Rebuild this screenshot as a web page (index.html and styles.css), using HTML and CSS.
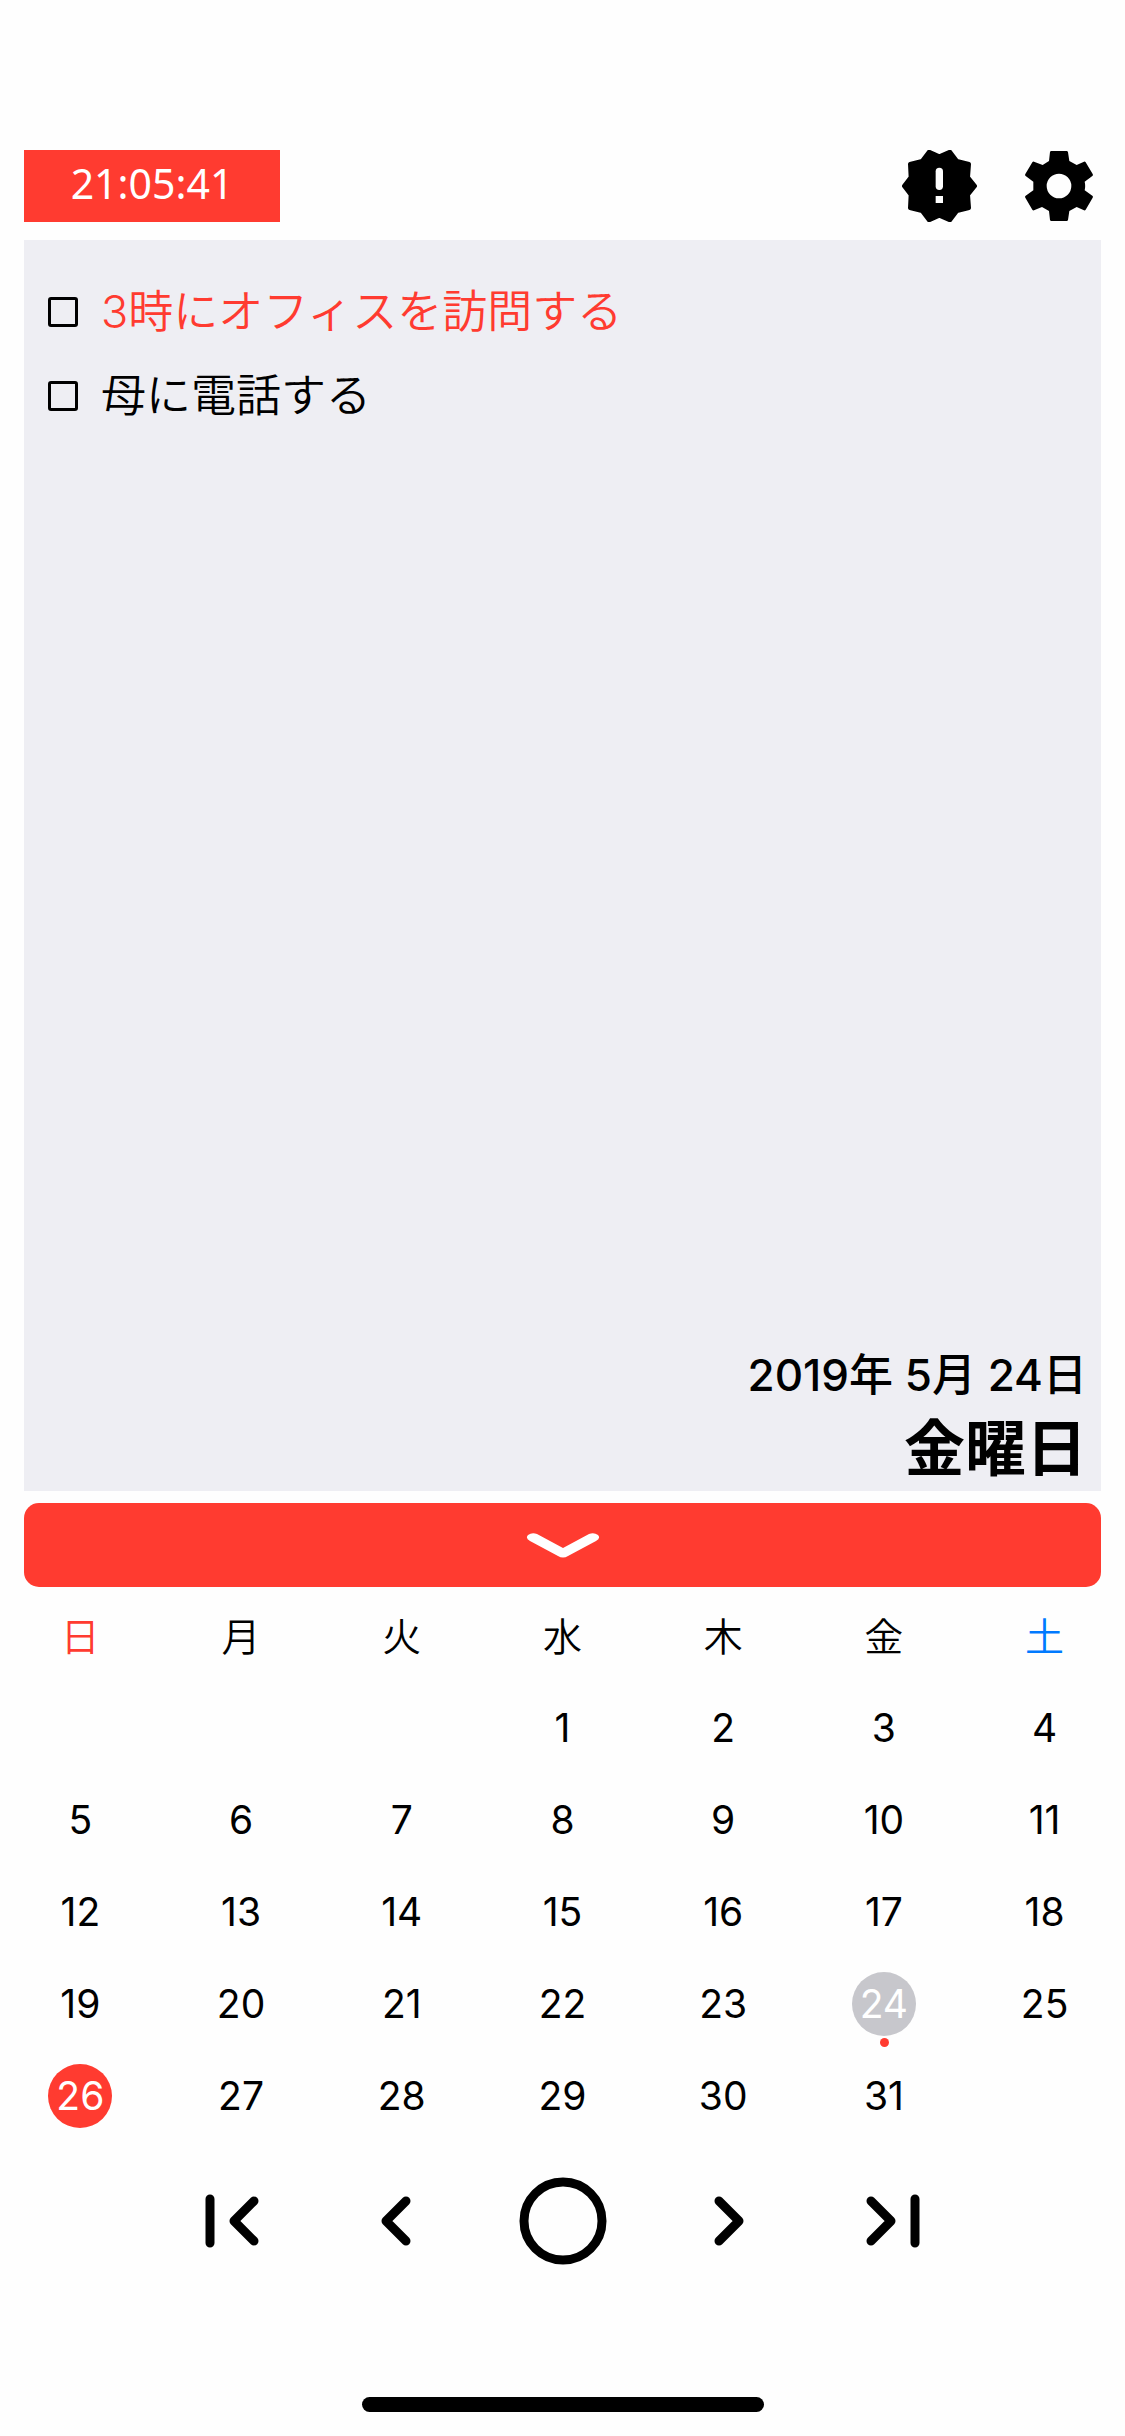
FILE: index.html
```html
<!DOCTYPE html>
<html lang="ja">
<head>
<meta charset="utf-8">
<meta name="viewport" content="width=device-width, initial-scale=1">
<title>カレンダー</title>
<link rel="stylesheet" href="styles.css">
</head>
<body>
<header class="topbar">
  <time class="clock">21:05:41</time>
  <div class="actions">
    <button class="icon-button" type="button" aria-label="お知らせ">
      <svg width="75" height="72" viewBox="65 60 225 216" aria-hidden="true">
        <path class="badge-shape" d="M71 168 91 142 89 102 125 93 146 65 177 79 209 65 230 93 266 102 263 142 284 168 263 194 266 234 230 243 209 271 177 257 146 271 125 243 89 234 91 194Z"/>
        <rect class="cutout" x="166" y="113" width="22" height="67" rx="11"/>
        <rect class="cutout" x="166" y="198" width="22" height="21"/>
      </svg>
    </button>
    <button class="icon-button" type="button" aria-label="設定">
      <svg width="68" height="70" viewBox="435 63 204 210" aria-hidden="true">
        <path fill-rule="evenodd" d="M514 63H560Q563 63 564 67L568 93 590 105 612 95Q615 94 617 97L638 132Q640 136 637 138L614 155Q617 168 614 181L637 197Q640 199 638 203L617 239Q615 242 612 241L590 231 568 243 564 270Q563 273 560 273H514Q511 273 510 270L507 243 486 231 462 241Q459 242 457 239L436 203Q434 199 437 197L460 181V155L437 138Q434 136 436 132L457 97Q459 94 462 95L488 105 507 93 510 66Q511 63 514 63ZM500 168a37 37 0 1 0 74 0a37 37 0 1 0-74 0Z"/>
      </svg>
    </button>
  </div>
</header>

<main class="main">
  <section class="memo">
    <ul class="tasks">
      <li><label class="task task-due"><input class="check" type="checkbox"><span>3時にオフィスを訪問する</span></label></li>
      <li><label class="task"><input class="check" type="checkbox"><span>母に電話する</span></label></li>
    </ul>
    <div class="today">
      <p class="date">2019年 5月 24日</p>
      <p class="weekday">金曜日</p>
    </div>
  </section>

  <button class="fold" type="button" aria-label="カレンダーを閉じる">
    <svg width="76" height="26" viewBox="0 0 76 26" aria-hidden="true"><path d="M3 3Q7 0 12 2L38 16 64 2Q69 0 73 3Q76 6 71 9L43 24Q38 27 33 24L5 9Q0 6 3 3Z"/></svg>
  </button>

  <table class="calendar">
    <thead>
      <tr><th class="sunday">日</th><th>月</th><th>火</th><th>水</th><th>木</th><th>金</th><th class="saturday">土</th></tr>
    </thead>
    <tbody>
      <tr><td></td><td></td><td></td><td><button class="day" type="button">1</button></td><td><button class="day" type="button">2</button></td><td><button class="day" type="button">3</button></td><td><button class="day" type="button">4</button></td></tr>
      <tr><td><button class="day" type="button">5</button></td><td><button class="day" type="button">6</button></td><td><button class="day" type="button">7</button></td><td><button class="day" type="button">8</button></td><td><button class="day" type="button">9</button></td><td><button class="day" type="button">10</button></td><td><button class="day" type="button">11</button></td></tr>
      <tr><td><button class="day" type="button">12</button></td><td><button class="day" type="button">13</button></td><td><button class="day" type="button">14</button></td><td><button class="day" type="button">15</button></td><td><button class="day" type="button">16</button></td><td><button class="day" type="button">17</button></td><td><button class="day" type="button">18</button></td></tr>
      <tr><td><button class="day" type="button">19</button></td><td><button class="day" type="button">20</button></td><td><button class="day" type="button">21</button></td><td><button class="day" type="button">22</button></td><td><button class="day" type="button">23</button></td><td><button class="day day-selected has-task" type="button">24</button></td><td><button class="day" type="button">25</button></td></tr>
      <tr><td><button class="day day-today" type="button">26</button></td><td><button class="day" type="button">27</button></td><td><button class="day" type="button">28</button></td><td><button class="day" type="button">29</button></td><td><button class="day" type="button">30</button></td><td><button class="day" type="button">31</button></td><td></td></tr>
    </tbody>
  </table>
</main>

<nav class="pager">
  <button class="icon-button" type="button" aria-label="前の年"><svg class="line-icon" width="88" height="88" viewBox="0 0 88 88" aria-hidden="true"><path d="M24 22V66M68 24 48 44 68 64"/></svg></button>
  <button class="icon-button" type="button" aria-label="前の月"><svg class="line-icon" width="88" height="88" viewBox="0 0 88 88" aria-hidden="true"><path d="M54 24 34 44 54 64"/></svg></button>
  <button class="icon-button" type="button" aria-label="今日"><svg class="line-icon" width="88" height="88" viewBox="0 0 88 88" aria-hidden="true"><circle cx="44" cy="44" r="39"/></svg></button>
  <button class="icon-button" type="button" aria-label="次の月"><svg class="line-icon" width="88" height="88" viewBox="0 0 88 88" aria-hidden="true"><path d="M34 24 54 44 34 64"/></svg></button>
  <button class="icon-button" type="button" aria-label="次の年"><svg class="line-icon" width="88" height="88" viewBox="0 0 88 88" aria-hidden="true"><path d="M19 24 39 44 19 64M63 22V66"/></svg></button>
</nav>
<div class="home-indicator"></div>
</body>
</html>
```
FILE: styles.css
```css
:root {
  --red: #ff3b30;
  --blue: #007aff;
  --gray: #c7c7cc;
  --panel: #eeeef3;
  --page: #fefefe;
}

* {
  box-sizing: border-box;
}

body {
  display: flex;
  flex-direction: column;
  min-height: 100vh;
  margin: 0;
  padding: 150px 0 24px;
  background: var(--page);
  color: #000;
  font-family: Inter, "Noto Sans CJK JP", sans-serif;
  font-size: 39px;
}

button {
  padding: 0;
  border: 0;
  background: none;
  color: inherit;
  font: inherit;
  cursor: pointer;
}

svg {
  display: block;
}

.topbar {
  display: flex;
  align-items: center;
  justify-content: space-between;
  margin: 0 32px 18px 24px;
}

.clock {
  width: 256px;
  padding-bottom: 6px;
  background: var(--red);
  color: #fff;
  font-family: "Noto Sans", sans-serif;
  font-size: 41px;
  line-height: 66px;
  text-align: center;
}

.actions {
  display: flex;
  align-items: center;
  gap: 48px;
}

.badge-shape {
  stroke: #000;
  stroke-width: 12;
  stroke-linejoin: round;
}

.cutout {
  fill: var(--page);
}

.main {
  display: flex;
  flex: 1;
  flex-direction: column;
}

.memo {
  display: flex;
  flex: 1;
  flex-direction: column;
  justify-content: space-between;
  gap: 48px;
  margin: 0 24px 12px;
  padding: 30px 14px 2px 24px;
  background: var(--panel);
}

.tasks {
  margin: 0;
  padding: 0;
  list-style: none;
}

.task {
  display: flex;
  align-items: center;
  gap: 23px;
  font-size: 45px;
  font-weight: 350;
  line-height: 84px;
}

.task-due {
  color: var(--red);
}

.check {
  appearance: none;
  width: 30px;
  height: 30px;
  margin: 0;
  border: 3px solid #000;
  border-radius: 3px;
}

.check:checked {
  background: #000;
}

.today {
  text-align: right;
}

.date,
.weekday {
  margin: 0;
}

.date {
  font-size: 44px;
  font-weight: 500;
  line-height: 68px;
}

.weekday {
  font-size: 61px;
  font-weight: 700;
  line-height: 80px;
}

.fold {
  display: flex;
  align-items: center;
  justify-content: center;
  height: 84px;
  margin: 0 24px 3px;
  border-radius: 15px;
  background: var(--red);
}

.fold path {
  fill: #fff;
}

.calendar {
  width: 100%;
  border-collapse: collapse;
  table-layout: fixed;
}

.calendar th,
.calendar td {
  height: 92px;
  padding: 0;
  font-weight: 400;
  text-align: center;
  vertical-align: middle;
}

.calendar th {
  padding-bottom: 4px;
  font-weight: 350;
}

.calendar .sunday {
  color: var(--red);
}

.calendar .saturday {
  color: var(--blue);
}

.day {
  position: relative;
  display: block;
  width: 64px;
  height: 64px;
  margin: 0 auto;
  border-radius: 50%;
  line-height: 64px;
}

.day-selected {
  background: var(--gray);
  color: #fff;
}

.day-today {
  background: var(--red);
  color: #fff;
}

.has-task::after {
  position: absolute;
  bottom: -11px;
  left: 28px;
  width: 9px;
  height: 9px;
  border-radius: 50%;
  background: var(--red);
  content: "";
}

.pager {
  display: grid;
  grid-template-columns: repeat(5, 1fr);
  justify-items: center;
  margin: 35px 0 132px;
  padding: 0 13%;
}

.line-icon {
  fill: none;
  stroke: #000;
  stroke-width: 9;
  stroke-linecap: round;
  stroke-linejoin: round;
}

.home-indicator {
  width: 402px;
  height: 15px;
  margin: 0 auto;
  border-radius: 8px;
  background: #000;
}
```
